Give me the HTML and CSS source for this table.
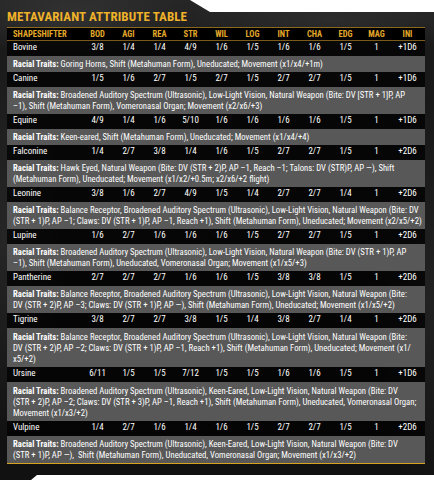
FILE: index.html
```html
<!DOCTYPE html>
<html>
<head>
<meta charset="utf-8">
<link rel="stylesheet" href="styles.css">
</head>
<body>
<div class="sheet">
  <h1 class="title">METAVARIANT ATTRIBUTE TABLE</h1>
  <div class="table">
    <div class="row head"><span class="name">SHAPESHIFTER</span><span>BOD</span><span>AGI</span><span>REA</span><span>STR</span><span>WIL</span><span>LOG</span><span>INT</span><span>CHA</span><span>EDG</span><span>MAG</span><span>INI</span></div>
    <div class="body">
      <div class="row"><span class="name">Bovine</span><span>3/8</span><span>1/4</span><span>1/4</span><span>4/9</span><span>1/6</span><span>1/5</span><span>1/6</span><span>1/6</span><span>1/5</span><span>1</span><span>+1D6</span></div>
      <div class="traits"><b>Racial Traits:</b> Goring Horns, Shift (Metahuman Form), Uneducated; Movement (x1/x4/+1m)</div>

      <div class="row"><span class="name">Canine</span><span>1/5</span><span>1/6</span><span>2/7</span><span>1/5</span><span>2/7</span><span>1/5</span><span>2/7</span><span>2/7</span><span>1/5</span><span>1</span><span>+1D6</span></div>
      <div class="traits"><b>Racial Traits:</b> Broadened Auditory Spectrum (Ultrasonic), Low-Light Vision, Natural Weapon (Bite: DV [STR + 1]P, AP<br>–1), Shift (Metahuman Form), Vomeronasal Organ; Movement (x2/x6/+3)</div>

      <div class="row"><span class="name">Equine</span><span>4/9</span><span>1/4</span><span>1/6</span><span>5/10</span><span>1/6</span><span>1/6</span><span>1/6</span><span>1/6</span><span>1/5</span><span>1</span><span>+1D6</span></div>
      <div class="traits"><b>Racial Traits:</b> Keen-eared, Shift (Metahuman Form), Uneducated; Movement (x1/x4/+4)</div>

      <div class="row"><span class="name">Falconine</span><span>1/4</span><span>2/7</span><span>3/8</span><span>1/4</span><span>1/6</span><span>1/5</span><span>2/7</span><span>2/7</span><span>1/5</span><span>1</span><span>+2D6</span></div>
      <div class="traits"><b>Racial Traits:</b> Hawk Eyed, Natural Weapon (Bite: DV (STR + 2)P, AP –1, Reach –1; Talons: DV (STR)P, AP —), Shift<br>(Metahuman Form), Uneducated; Movement (x1/x2/+0.5m; x2/x6/+2 flight)</div>

      <div class="row"><span class="name">Leonine</span><span>3/8</span><span>1/6</span><span>2/7</span><span>4/9</span><span>1/5</span><span>1/4</span><span>2/7</span><span>2/7</span><span>1/4</span><span>1</span><span>+2D6</span></div>
      <div class="traits"><b>Racial Traits:</b> Balance Receptor, Broadened Auditory Spectrum (Ultrasonic), Low-Light Vision, Natural Weapon (Bite: DV<br>(STR + 1)P, AP –1; Claws: DV (STR + 1)P, AP –1, Reach +1), Shift (Metahuman Form), Uneducated; Movement (x2/x5/+2)</div>

      <div class="row"><span class="name">Lupine</span><span>1/6</span><span>2/7</span><span>1/6</span><span>1/6</span><span>1/6</span><span>1/5</span><span>2/7</span><span>2/7</span><span>1/5</span><span>1</span><span>+2D6</span></div>
      <div class="traits"><b>Racial Traits:</b> Broadened Auditory Spectrum (Ultrasonic), Low-Light Vision, Natural Weapon (Bite: DV (STR + 1)P, AP<br>–1), Shift (Metahuman Form), Uneducated, Vomeronasal Organ; Movement (x1/x5/+3)</div>

      <div class="row"><span class="name">Pantherine</span><span>2/7</span><span>2/7</span><span>2/7</span><span>1/6</span><span>1/6</span><span>1/5</span><span>3/8</span><span>3/8</span><span>1/5</span><span>1</span><span>+2D6</span></div>
      <div class="traits"><b>Racial Traits:</b> Balance Receptor, Broadened Auditory Spectrum (Ultrasonic), Low-Light Vision, Natural Weapon (Bite:<br>DV (STR + 2)P, AP –3; Claws: DV (STR + 1)P, AP —), Shift (Metahuman Form), Uneducated; Movement (x1/x5/+2)</div>

      <div class="row"><span class="name">Tigrine</span><span>3/8</span><span>2/7</span><span>2/7</span><span>3/8</span><span>1/5</span><span>1/4</span><span>3/8</span><span>2/7</span><span>1/4</span><span>1</span><span>+2D6</span></div>
      <div class="traits three"><b>Racial Traits:</b> Balance Receptor, Broadened Auditory Spectrum (Ultrasonic), Low-Light Vision, Natural Weapon (Bite:<br>DV (STR + 2)P, AP –2; Claws: DV (STR + 1)P, AP –1, Reach +1), Shift (Metahuman Form), Uneducated; Movement (x1/<br>x5/+2)</div>

      <div class="row"><span class="name">Ursine</span><span>6/11</span><span>1/5</span><span>1/5</span><span>7/12</span><span>1/5</span><span>1/5</span><span>1/6</span><span>1/6</span><span>1/5</span><span>1</span><span>+1D6</span></div>
      <div class="traits three"><b>Racial Traits:</b> Broadened Auditory Spectrum (Ultrasonic), Keen-Eared, Low-Light Vision, Natural Weapon (Bite: DV<br>(STR + 2)P, AP –2; Claws: DV (STR + 3)P, AP –1, Reach +1), Shift (Metahuman Form), Uneducated, Vomeronasal Organ;<br>Movement (x1/x3/+2)</div>

      <div class="row"><span class="name">Vulpine</span><span>1/4</span><span>2/7</span><span>1/6</span><span>1/4</span><span>1/6</span><span>1/5</span><span>2/7</span><span>2/7</span><span>1/5</span><span>1</span><span>+2D6</span></div>
      <div class="traits"><b>Racial Traits:</b> Broadened Auditory Spectrum (Ultrasonic), Keen-Eared, Low-Light Vision, Natural Weapon (Bite: DV<br>(STR + 1)P, AP —),&nbsp; Shift (Metahuman Form), Uneducated, Vomeronasal Organ; Movement (x1/x3/+2)</div>
    </div>
  </div>
</div>
</body>
</html>
```
FILE: styles.css
```css
html, body {
  margin: 0;
  padding: 0;
  background: #ffffff;
}

.sheet {
  width: 434px;
  height: 480px;
  box-sizing: border-box;
  padding: 10px 9px 0 7px;
  font-family: "Roboto Condensed", "Roboto", sans-serif;
  color: #ffffff;
  background:
    radial-gradient(ellipse 120px 40px at 70px 18px, rgba(80,80,80,0.35), rgba(80,80,80,0) 100%),
    radial-gradient(ellipse 160px 30px at 330px 20px, rgba(70,70,70,0.3), rgba(70,70,70,0) 100%),
    radial-gradient(ellipse 60px 200px at 4px 240px, rgba(70,70,70,0.35), rgba(70,70,70,0) 100%),
    radial-gradient(ellipse 60px 200px at 430px 300px, rgba(60,60,60,0.35), rgba(60,60,60,0) 100%),
    linear-gradient(180deg, #262626 0%, #1a1a1a 10%, #141414 60%, #111111 100%);
  clip-path: polygon(0 0, 190px 0, 210px 12px, 100% 12px, 100% 475px, 37px 475px, 31px 480px, 0 480px);
}

.title {
  margin: 0 0 4px 0;
  font-size: 13px;
  line-height: 13px;
  font-weight: 700;
  letter-spacing: 0.1px;
  color: #eeb12a;
}

.table {
  width: 418px;
}

.row {
  display: grid;
  grid-template-columns: 75px repeat(11, 31px);
  height: 15px;
  box-sizing: border-box;
  padding-bottom: 2px;
  line-height: 13px;
  font-size: 9px;
  text-align: center;
  white-space: nowrap;
}

.row .name {
  text-align: left;
  padding-left: 6px;
}

.head {
  height: 14px;
  padding-bottom: 0;
  line-height: 12px;
  font-size: 8.5px;
  font-weight: 700;
  color: #e3a82a;
  background: #000000;
  border-top: 1px solid #8c6a1c;
  border-bottom: 1px solid #7a5c18;
}

.body {
  background: rgba(0, 0, 0, 0.72);
  border-bottom: 1px solid #d9a21e;
}

.traits {
  background: #585858;
  padding: 3px 4px 2px 6px;
  font-size: 8.7px;
  line-height: 11px;
  white-space: nowrap;
}

.traits.three {
  padding-top: 4px;
}

.traits b {
  font-weight: 700;
}
```
